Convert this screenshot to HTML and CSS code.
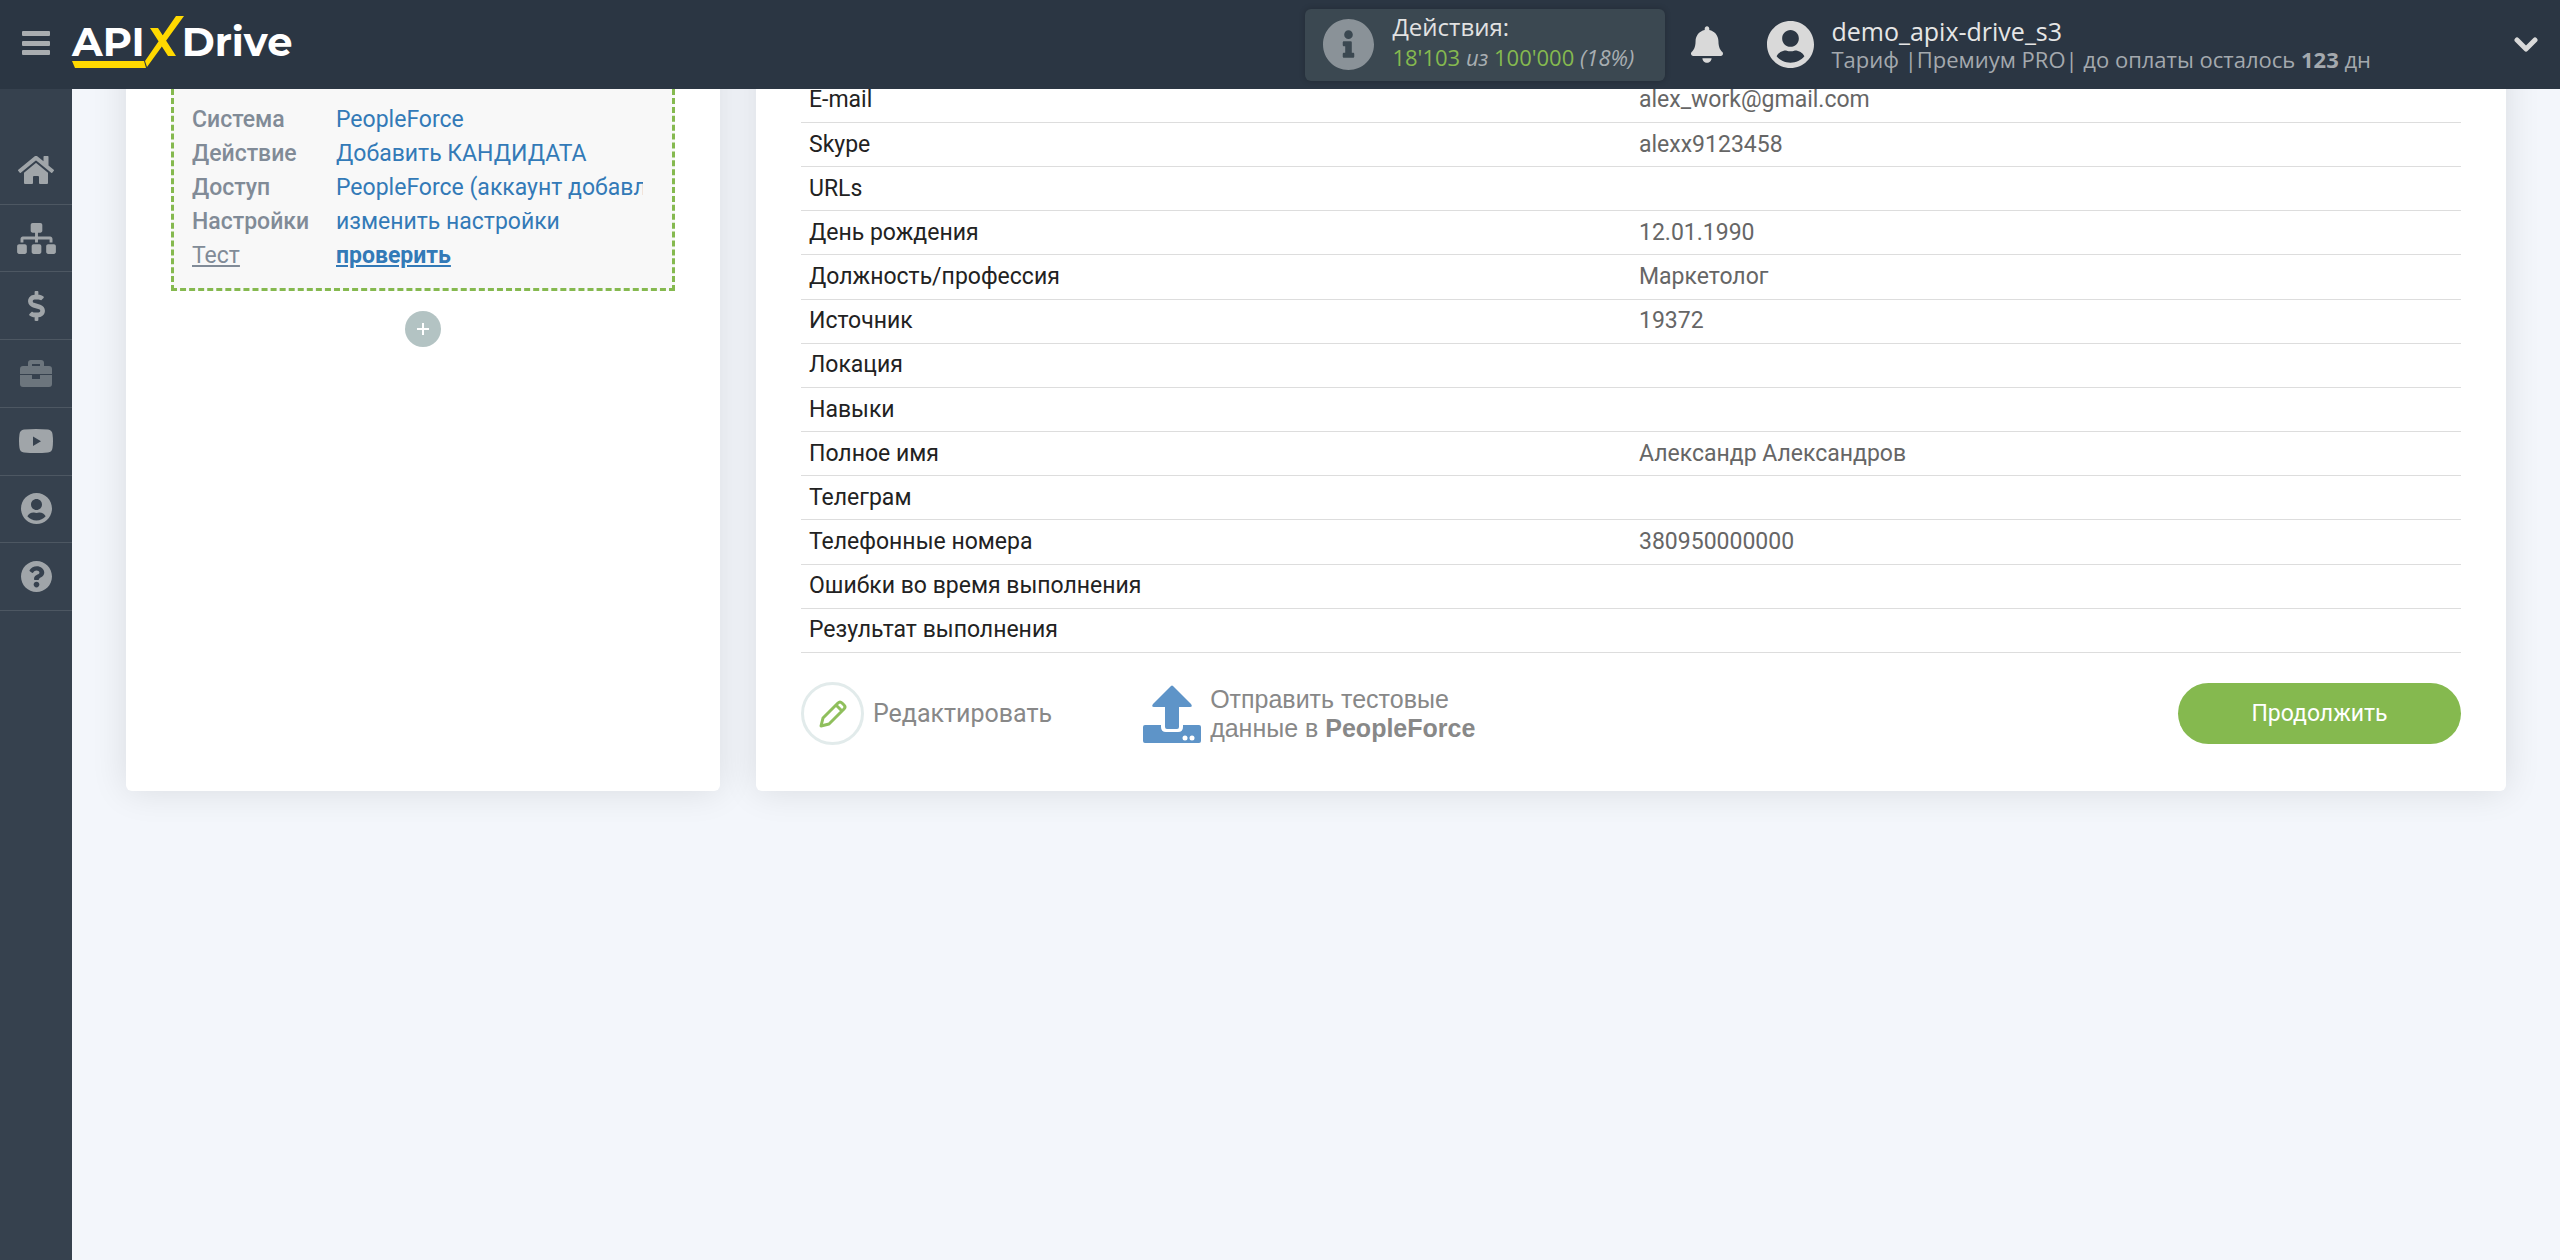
FILE: index.html
```html
<!DOCTYPE html>
<html lang="ru">
<head>
<meta charset="utf-8">
<title>ApiX-Drive</title>
<link rel="stylesheet" href="styles.css">
</head>
<body>
<header class="topbar">
  <button class="menu-btn" type="button" aria-label="Меню">
    <svg viewBox="0 0 28 24" width="28" height="24"><path fill="#a9adb0" d="M1 0h26q1 0 1 1v3q0 1-1 1H1Q0 5 0 4V1q0-1 1-1zM1 10h26q1 0 1 1v3q0 1-1 1H1q-1 0-1-1v-3q0-1 1-1zM1 19h26q1 0 1 1v3q0 1-1 1H1q-1 0-1-1v-3q0-1 1-1z"/></svg>
  </button>
  <a class="logo" href="#" aria-label="APIXDrive">
    <span class="logo-text">API</span><svg class="logo-x" viewBox="0 0 40 51" width="40" height="51"><path fill="#ffd900" d="M5 12h8l18 28h-8zM31 0h8L2 51 0 45z"/></svg><span class="logo-text">Drive</span>
    <svg class="logo-line" viewBox="0 0 74 7" width="74" height="7"><path fill="#ffd900" d="M0 0h72l2 7H3z"/></svg>
  </a>
  <section class="usage">
    <svg viewBox="8 8 496 496" width="51" height="51"><path fill="#8a9298" d="M256 8C119 8 8 119 8 256s111 248 248 248 248-111 248-248S393 8 256 8zm0 110c23 0 42 19 42 42s-19 42-42 42-42-19-42-42 19-42 42-42zm56 254c0 7-5 12-12 12h-88c-7 0-12-5-12-12v-24c0-7 5-12 12-12h12v-64h-12c-7 0-12-5-12-12v-24c0-7 5-12 12-12h64c7 0 12 5 12 12v100h12c7 0 12 5 12 12z"/></svg>
    <div class="usage-text">
      <div class="usage-title">Действия:</div>
      <div class="usage-count"><b>18'103</b> <i>из</i> <b>100'000</b> <i>(18%)</i></div>
    </div>
  </section>
  <button class="bell" type="button" aria-label="Уведомления">
    <svg viewBox="0 0 448 512" width="32" height="37"><path fill="#d9d9d9" d="M224 512c35.300 0 63.900-28.700 63.900-64H160.100c0 35.300 28.600 64 63.900 64zm215.400-149.700c-19.300-20.800-55.500-52-55.500-154.300 0-77.700-54.500-139.900-127.900-155.200V32c0-17.700-14.300-32-32-32s-32 14.300-32 32v20.800C118.600 68.100 64.100 130.300 64.100 208c0 102.300-36.200 133.500-55.500 154.300-6 6.400-8.700 14.100-8.600 21.700.1 16.400 13 32 32.100 32h383.800c19.100 0 32-15.600 32.100-32 0-7.600-2.700-15.300-8.600-21.700z"/></svg>
  </button>
  <a class="account" href="#">
    <svg viewBox="0 8 496 496" width="47" height="47"><path fill="#d9d9d9" d="M248 8C111 8 0 119 0 256s111 248 248 248 248-111 248-248S385 8 248 8zm0 96c48.600 0 88 39.400 88 88s-39.400 88-88 88-88-39.400-88-88 39.400-88 88-88zm0 344c-58.700 0-111.300-26.600-146.500-68.200 18.800-35.400 55.600-59.800 98.500-59.800 2.400 0 4.800.4 7.100 1.100 13 4.200 26.600 6.900 40.900 6.900 14.300 0 28-2.700 40.900-6.900 2.300-.7 4.700-1.100 7.100-1.100 42.900 0 79.700 24.400 98.500 59.800C359.300 421.400 306.700 448 248 448z"/></svg>
    <span class="account-text">
      <span class="account-name">demo_apix-drive_s3</span>
      <span class="account-plan">Тариф |Премиум PRO| до оплаты осталось <b>123</b> дн</span>
    </span>
  </a>
  <button class="expand" type="button" aria-label="Развернуть">
    <svg viewBox="0 0 24 16" width="24" height="16"><path fill="none" stroke="#d9d9d9" stroke-width="5" stroke-linecap="round" stroke-linejoin="round" d="M3 3l9 9 9-9"/></svg>
  </button>
</header>

<nav class="sidebar">
  <div class="sidebar-list">
  <a href="#" aria-label="Главная"><svg viewBox="0 32 576 448" width="36" height="28"><path d="M280.400 148.300L96 300.100V464a16 16 0 0 0 16 16l112-.3a16 16 0 0 0 16-16V368a16 16 0 0 1 16-16h64a16 16 0 0 1 16 16v95.600a16 16 0 0 0 16 16.100L464 480a16 16 0 0 0 16-16V300L295.700 148.300a12.200 12.200 0 0 0-15.300 0zM571.600 251.500L488 182.600V44a12 12 0 0 0-12-12h-56a12 12 0 0 0-12 12v72.600L318.500 43a48 48 0 0 0-61 0L4.300 251.500a12 12 0 0 0-1.600 16.900l25.500 31a12 12 0 0 0 16.900 1.600l235.200-193.700a12.200 12.200 0 0 1 15.300 0L530.900 301a12 12 0 0 0 16.900-1.600l25.500-31a12 12 0 0 0-1.700-16.900z"/></svg></a>
  <a href="#" aria-label="Связи"><svg viewBox="0 0 640 512" width="39" height="31"><path d="M128 352H32c-17.700 0-32 14.300-32 32v96c0 17.700 14.300 32 32 32h96c17.700 0 32-14.300 32-32v-96c0-17.700-14.300-32-32-32zm-24-80h192v48h48v-48h192v48h48v-57.600c0-21.200-17.200-38.400-38.400-38.400H344v-64h40c17.700 0 32-14.300 32-32V32c0-17.700-14.300-32-32-32H256c-17.700 0-32 14.300-32 32v96c0 17.700 14.300 32 32 32h40v64H94.400C73.200 224 56 241.200 56 262.400V320h48v-48zm264 80h-96c-17.700 0-32 14.300-32 32v96c0 17.700 14.300 32 32 32h96c17.700 0 32-14.300 32-32v-96c0-17.700-14.300-32-32-32zm240 0h-96c-17.700 0-32 14.300-32 32v96c0 17.700 14.300 32 32 32h96c17.700 0 32-14.300 32-32v-96c0-17.700-14.300-32-32-32z"/></svg></a>
  <a href="#" aria-label="Оплата"><svg viewBox="0 0 288 512" width="17" height="30"><path d="M209.200 233.400l-108-31.600C88.700 198.200 80 186.500 80 173.500c0-16.300 13.200-29.500 29.500-29.500h66.300c12.200 0 24.200 3.700 34.200 10.500 6.100 4.100 14.300 3.100 19.500-2l34.800-34c7.100-6.900 6.100-18.400-1.800-24.500C238 74.800 207.400 64.100 176 64V16c0-8.800-7.200-16-16-16h-32c-8.800 0-16 7.200-16 16v48h-2.500C45.800 64-5.400 118.700.5 183.600c4.200 46.100 39.400 83.600 83.800 96.600l102.500 30c12.500 3.700 21.200 15.300 21.200 28.300 0 16.300-13.200 29.500-29.500 29.500h-66.300C100 368 88 364.300 78 357.500c-6.100-4.100-14.300-3.100-19.500 2l-34.800 34c-7.100 6.900-6.100 18.400 1.800 24.500 24.500 19.200 55.100 29.900 86.500 30v48c0 8.800 7.200 16 16 16h32c8.800 0 16-7.200 16-16v-48.200c46.600-.9 90.300-28.600 105.700-72.700 21.500-61.600-14.600-124.800-72.500-141.700z"/></svg></a>
  <a href="#" class="dim" aria-label="Проекты"><svg viewBox="0 0 32 27" width="32" height="27"><path fill-rule="evenodd" d="M8 6V3q0-3 3-3h10q3 0 3 3v3h5q3 0 3 3v5H0V9q0-3 3-3zM12 4v2h8V4zM0 15h12v4h8v-4h12v9q0 3-3 3H3q-3 0-3-3z"/></svg></a>
  <a href="#" aria-label="Видео"><svg viewBox="0 0 34 24" width="34" height="24"><path d="M5 .5Q17-.5 29 .5q4 .5 4.500 4.500 1 7 0 14-.5 4-4.500 4.500-12 1-24 0Q1 23 .5 19-.5 12 .5 5 1 1 5 .5zM14 7.500v9.500l8-4.700z"/></svg></a>
  <a href="#" aria-label="Профиль"><svg viewBox="0 8 496 496" width="31" height="31"><path d="M248 8C111 8 0 119 0 256s111 248 248 248 248-111 248-248S385 8 248 8zm0 96c48.600 0 88 39.400 88 88s-39.400 88-88 88-88-39.400-88-88 39.400-88 88-88zm0 344c-58.700 0-111.300-26.600-146.500-68.200 18.800-35.400 55.600-59.800 98.500-59.800 2.400 0 4.800.4 7.100 1.100 13 4.200 26.600 6.900 40.900 6.900 14.300 0 28-2.700 40.900-6.900 2.300-.7 4.700-1.100 7.100-1.100 42.900 0 79.700 24.400 98.500 59.800C359.300 421.400 306.700 448 248 448z"/></svg></a>
  <a href="#" aria-label="Помощь"><svg viewBox="8 8 496 496" width="31" height="31"><path d="M504 256c0 137-111 248-248 248S8 393 8 256C8 119.100 119 8 256 8s248 111.100 248 248zM262.700 90c-54.500 0-89.300 23-116.500 63.800-3.500 5.300-2.400 12.400 2.700 16.300l34.700 26.300c5.200 3.900 12.600 3 16.700-2.100 17.900-22.700 30.100-35.800 57.300-35.800 20.400 0 45.700 13.100 45.700 33 0 15-12.400 22.700-32.500 34C247.100 238.500 216 255 216 296v4c0 6.600 5.400 12 12 12h56c6.600 0 12-5.400 12-12v-1.300c0-28.800 84.200-30 84.200-108C380.200 131.900 319.200 90 262.700 90zM256 338c-25.400 0-46 20.600-46 46s20.600 46 46 46 46-20.600 46-46-20.600-46-46-46z"/></svg></a>
  </div>
</nav>

<main class="content">
  <section class="card steps">
    <div class="step">
      <dl class="step-list">
        <dt>Система</dt><dd><a href="#">PeopleForce</a></dd>
        <dt>Действие</dt><dd><a href="#">Добавить КАНДИДАТА</a></dd>
        <dt>Доступ</dt><dd><a href="#">PeopleForce (аккаунт добавлен)</a></dd>
        <dt>Настройки</dt><dd><a href="#">изменить настройки</a></dd>
        <dt class="current">Тест</dt><dd class="current"><a href="#">проверить</a></dd>
      </dl>
    </div>
    <button class="add" type="button" aria-label="Добавить"><svg viewBox="0 0 12 12" width="12" height="12"><path stroke="#fff" stroke-width="2" d="M6 0v12M0 6h12"/></svg></button>
  </section>

  <section class="card result">
    <table class="fields">
      <tbody>
        <tr><th scope="row">E-mail</th><td>alex_work@gmail.com</td></tr>
        <tr><th scope="row">Skype</th><td>alexx9123458</td></tr>
        <tr><th scope="row">URLs</th><td></td></tr>
        <tr><th scope="row">День рождения</th><td>12.01.1990</td></tr>
        <tr><th scope="row">Должность/профессия</th><td>Маркетолог</td></tr>
        <tr><th scope="row">Источник</th><td>19372</td></tr>
        <tr><th scope="row">Локация</th><td></td></tr>
        <tr><th scope="row">Навыки</th><td></td></tr>
        <tr><th scope="row">Полное имя</th><td>Александр Александров</td></tr>
        <tr><th scope="row">Телеграм</th><td></td></tr>
        <tr><th scope="row">Телефонные номера</th><td>380950000000</td></tr>
        <tr><th scope="row">Ошибки во время выполнения</th><td></td></tr>
        <tr><th scope="row">Результат выполнения</th><td></td></tr>
      </tbody>
    </table>
    <div class="actions">
      <button class="edit" type="button">
        <span class="edit-ring"><svg viewBox="0 0 28 28" width="28" height="28"><path fill="none" stroke="#8fbf5c" stroke-width="3" stroke-linejoin="round" d="M2 26l2-8L19 3q2-2 4 0l2 2q2 2 0 4L10 24zM17 5l6 6"/></svg></span>
        Редактировать
      </button>
      <button class="send" type="button">
        <svg viewBox="0 0 58 58" width="58" height="58"><path fill="#5e94c8" d="M28 1q1-1 2 0l18 18q2 3-1 3H36v20q0 2-2 2H24q-2 0-2-2V22H11q-3 0-1-3zM2 40h16v2q0 5 5 5h12q5 0 5-5v-2h16q2 0 2 2v14q0 2-2 2H2q-2 0-2-2V42q0-2 2-2z"/><circle cx="42" cy="53" r="2.500" fill="#fff"/><circle cx="49" cy="53" r="2.500" fill="#fff"/></svg>
        <span>Отправить тестовые<br>данные в <b>PeopleForce</b></span>
      </button>
      <button class="next" type="button">Продолжить</button>
    </div>
  </section>
</main>
</body>
</html>
```
FILE: styles.css
```css
* { box-sizing: border-box; }
body {
  margin: 0;
  min-height: 100vh;
  background: #f3f6fb;
  font-family: Roboto, "Liberation Sans", sans-serif;
  font-size: 23px;
}
button { border: 0; padding: 0; background: none; font: inherit; color: inherit; cursor: pointer; }
a { color: inherit; text-decoration: none; }
svg { display: block; flex: none; }

.topbar {
  position: fixed;
  inset: 0 0 auto 0;
  z-index: 2;
  height: 89px;
  display: flex;
  align-items: center;
  background: #2b3643;
  color: #e2e2e2;
  font-family: "Open Sans", "Noto Sans", sans-serif;
}
.menu-btn { margin: 0 22px; padding-bottom: 4px; }
.logo {
  position: relative;
  display: flex;
  align-items: center;
  margin-right: auto;
  padding-bottom: 6px;
  color: #fff;
  font: 700 40px/48px Montserrat, "Open Sans", sans-serif;
}
.logo-x { margin-right: -3px; }
.logo-line { position: absolute; left: 0; bottom: 5px; }

.usage {
  display: flex;
  align-items: center;
  gap: 18px;
  width: 360px;
  height: 72px;
  padding-left: 18px;
  border-radius: 6px;
  background: #3b4851;
  box-shadow: 0 0 6px rgba(0, 0, 0, .2);
}
.usage-text { padding-bottom: 6px; line-height: 30px; }
.usage-title { font-size: 24px; }
.usage-count { font-size: 22px; color: #a8aeb1; }
.usage-count b { color: #85b94f; font-weight: 400; }
.bell { margin: 0 44px 0 26px; }
.account { display: flex; align-items: center; gap: 17px; }
.account-text { line-height: 28px; }
.account-text span { display: block; }
.account-name { font-size: 25px; color: #e6e6e6; }
.account-plan { font-size: 22px; color: #a4a9ae; }
.expand { margin: 0 22px 0 143px; }

.sidebar {
  position: fixed;
  inset: 0 auto 0 0;
  z-index: 1;
  width: 72px;
  padding-top: 137px;
  background: #36414e;
}
.sidebar-list { display: flex; flex-direction: column; height: 474px; }
.sidebar a {
  flex: 1;
  display: flex;
  align-items: center;
  justify-content: center;
  border-bottom: 1px solid #4d5762;
}
.sidebar svg { fill: #a0a5a9; }
.sidebar .dim svg { fill: #6c757d; }

.content {
  display: grid;
  grid-template-columns: 594fr 1750fr;
  gap: 36px;
  padding: 0 54px 60px 126px;
}
.card {
  padding: 0 45px;
  border-radius: 6px;
  background: #fff;
  box-shadow: 0 0 36px rgba(0, 0, 0, .11);
}

.step {
  padding: 103px 29px 15px 18px;
  border: 3px dashed #85b94f;
  border-top: 0;
  background: #f8f8f8;
}
.step-list {
  display: grid;
  grid-template-columns: 144px 1fr;
  margin: 0;
  line-height: 34px;
}
.step-list dt { color: #818b97; font-weight: 500; }
.step-list dd { margin: 0; color: #337ab7; white-space: nowrap; overflow: hidden; }
.step-list .current { text-decoration: underline; }
.step-list dt.current { font-weight: 400; }
.step-list dd.current { font-weight: 700; }
.add {
  display: flex;
  align-items: center;
  justify-content: center;
  width: 36px;
  height: 36px;
  margin: 20px auto 0;
  border-radius: 50%;
  background: #b3c3c3;
}

.result { padding-top: 79px; padding-bottom: 46px; }
.fields { width: 100%; height: 574px; border-collapse: collapse; table-layout: fixed; }
.fields th, .fields td {
  padding: 0 8px;
  border-bottom: 1px solid #ddd;
  text-align: left;
  font-weight: 400;
  line-height: 32px;
}
.fields th { color: #222; }
.fields td { color: #666; }

.actions { display: flex; align-items: center; margin-top: 29px; color: #888; font-size: 25px; }
.edit { display: flex; align-items: center; gap: 9px; }
.edit-ring {
  display: flex;
  align-items: center;
  justify-content: center;
  width: 63px;
  height: 63px;
  border: 3px solid #e2ebeb;
  border-radius: 50%;
}
.send {
  display: flex;
  align-items: center;
  gap: 9px;
  margin-left: 91px;
  text-align: left;
  font: 25px/29px "Liberation Sans", Arial, sans-serif;
}
.next {
  width: 283px;
  height: 61px;
  margin-left: auto;
  border-radius: 31px;
  background: #85b94f;
  color: #fff;
  font-size: 23px;
}
```
